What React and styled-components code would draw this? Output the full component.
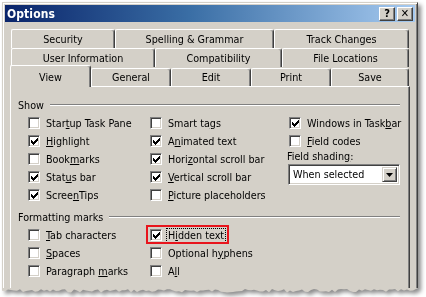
import React from "react";
import styled, { createGlobalStyle } from "styled-components";

const GlobalStyle = createGlobalStyle`
  html, body {
    margin: 0;
    padding: 0;
    background: #ffffff;
  }
  body {
    font-family: Tahoma, "DejaVu Sans Condensed", "Liberation Sans", sans-serif;
    font-size: 10.7px;
    color: #000;
  }
`;

const Page = styled.div`
  width: 426px;
  height: 297px;
  overflow: hidden;
  padding: 2px 0 0 2px;
  box-sizing: border-box;
`;

const Frame = styled.div`
  width: 416px;
  filter: drop-shadow(3px 3px 2px rgba(0, 0, 0, 0.45));
`;

const Window = styled.div`
  background: #d4d0c8;
  border: 1px solid;
  border-bottom: none;
  border-color: #d4d0c8 #404040 #404040 #d4d0c8;
  box-shadow: inset 1px 1px #ffffff, inset -1px 0 #808080;
  padding: 2px 2px 0 2px;
  height: 286px;
  box-sizing: border-box;
  display: flex;
  flex-direction: column;
`;

const TitleBar = styled.div`
  height: 17px;
  flex-shrink: 0;
  display: flex;
  align-items: center;
  padding: 0 2px 0 2px;
  background: linear-gradient(90deg, #0a246a 0%, #3a6ea5 45%, #a6caf0 100%);
`;

const Title = styled.div`
  flex: 1;
  color: #fff;
  font-weight: bold;
  font-size: 12px;
  letter-spacing: 0.1px;
`;

const CaptionButton = styled.div`
  width: 16px;
  height: 14px;
  margin-left: 2px;
  box-sizing: border-box;
  background: #d4d0c8;
  border: 1px solid;
  border-color: #fff #404040 #404040 #fff;
  box-shadow: inset -1px -1px #808080;
  display: flex;
  align-items: center;
  justify-content: center;
  font-weight: bold;
  font-size: 11px;
  line-height: 1;
`;

const Body = styled.div`
  flex: 1;
  display: flex;
  flex-direction: column;
  padding-top: 7px;
  min-height: 0;
`;

const TabRow = styled.div`
  display: flex;
  align-items: flex-end;
  height: ${(p) => p.$h}px;
  margin-left: ${(p) => p.$indent}px;
  position: relative;
  z-index: ${(p) => (p.$front ? 2 : 1)};
`;

const Tab = styled.div`
  width: ${(p) => p.$w}px;
  height: ${(p) => (p.$active ? 22 : p.$front ? 18 : 19)}px;
  margin-bottom: ${(p) => (p.$active ? -1 : 0)}px;
  box-sizing: border-box;
  background: #d4d0c8;
  border-top: 1px solid #fff;
  border-left: 1px solid #fff;
  border-right: 1px solid #404040;
  box-shadow: inset -1px 0 #808080;
  border-radius: 2px 3px 0 0;
  display: flex;
  align-items: ${(p) => (p.$active ? "flex-start" : "center")};
  padding-top: ${(p) => (p.$active ? 5 : 0)}px;
  justify-content: center;
  white-space: nowrap;
  position: relative;
  z-index: ${(p) => (p.$active ? 3 : 1)};
`;

const Panel = styled.div`
  flex: 1;
  width: 400px;
  margin-left: 5px;
  box-sizing: border-box;
  border-top: 1px solid #fff;
  border-left: 1px solid #fff;
  border-right: 1px solid #404040;
  box-shadow: inset -1px 0 #808080;
  padding: 11px 9px 0 7px;
  position: relative;
  z-index: 1;
`;

const GroupLabel = styled.div`
  display: flex;
  align-items: center;
  height: 14px;
  margin-top: ${(p) => p.$top || 0}px;
  margin-bottom: 2px;
  & > span {
    white-space: nowrap;
  }
  &::after {
    content: "";
    flex: 1;
    margin-left: 6px;
    border-top: 1px solid #808080;
    border-bottom: 1px solid #fff;
  }
`;

const Grid = styled.div`
  display: grid;
  grid-template-columns: 122px 139px 1fr;
  padding-left: 10px;
`;

const Column = styled.div`
  display: flex;
  flex-direction: column;
`;

const Option = styled.div`
  display: flex;
  align-items: center;
  height: 18px;
  white-space: nowrap;
`;

const OptionInner = styled.div`
  display: inline-flex;
  align-items: center;
  height: 18px;
  position: relative;
  ${(p) =>
    p.$marked &&
    `
    &::after {
      content: "";
      position: absolute;
      top: -1px;
      bottom: 0;
      left: -4px;
      right: -3px;
      border: 2px solid #e8141c;
    }
  `}
`;

const Box = styled.div`
  width: 12px;
  height: 12px;
  box-sizing: border-box;
  background: #fff;
  border: 1px solid;
  border-color: #808080 #fff #fff #808080;
  box-shadow: inset 1px 1px #404040, inset -1px -1px #d4d0c8;
  display: flex;
  align-items: center;
  justify-content: center;
  flex-shrink: 0;
`;

const Label = styled.span`
  margin-left: 4px;
  padding: 0 1px;
  border: 1px dotted ${(p) => (p.$focus ? "#000" : "transparent")};
  line-height: 13px;
`;

const FieldLabel = styled.div`
  height: 14px;
  line-height: 14px;
  white-space: nowrap;
  margin-left: -2px;
`;

const Select = styled.div`
  margin-top: 0;
  margin-left: -1px;
  width: 112px;
  height: 21px;
  box-sizing: border-box;
  background: #fff;
  border: 1px solid;
  border-color: #808080 #fff #fff #808080;
  box-shadow: inset 1px 1px #404040, inset -1px -1px #d4d0c8;
  display: flex;
  align-items: center;
  padding: 2px 2px 2px 4px;
`;

const SelectText = styled.div`
  flex: 1;
`;

const DropButton = styled.div`
  width: 15px;
  height: 15px;
  box-sizing: border-box;
  background: #d4d0c8;
  border: 1px solid;
  border-color: #d4d0c8 #404040 #404040 #d4d0c8;
  box-shadow: inset 1px 1px #fff, inset -1px -1px #808080;
  display: flex;
  align-items: center;
  justify-content: center;
`;

const Torn = styled.svg`
  display: block;
`;

const Check = () => (
  <svg width="7" height="7" viewBox="0 0 7 7">
    <path d="M0 2h1v1h1v1h1V3h1V2h1V1h1V0h1v3h-1v1h-1v1h-1v1h-1v1H2V6H1V5H0z" fill="#000" />
  </svg>
);

const CheckOption = ({ checked, children, marked, focus }) => (
  <Option>
    <OptionInner $marked={marked}>
      <Box>{checked && <Check />}</Box>
      <Label $focus={focus}>{children}</Label>
    </OptionInner>
  </Option>
);

const tornPoints = () => {
  const pts = ["0,0"];
  let seed = 7;
  for (let x = 0; x <= 416; x += 3) {
    seed = (seed * 9301 + 49297) % 233280;
    const y = 1 + (seed / 233280) * 3.5;
    pts.push(`${x},${y.toFixed(1)}`);
  }
  pts.push("416,0");
  return pts.join(" ");
};

const rows = [
  [
    ["Security", 104],
    ["Spelling & Grammar", 159],
    ["Track Changes", 135],
  ],
  [
    ["User Information", 144],
    ["Compatibility", 127],
    ["File Locations", 127],
  ],
];

const frontTabs = [
  ["View", 81],
  ["General", 80],
  ["Edit", 80],
  ["Print", 80],
  ["Save", 78],
];

export default function App() {
  return (
    <Page>
      <GlobalStyle />
      <Frame>
        <Window>
          <TitleBar>
            <Title>Options</Title>
            <CaptionButton>?</CaptionButton>
            <CaptionButton>✕</CaptionButton>
          </TitleBar>
          <Body>
            {rows.map((row, i) => (
              <TabRow key={i} $h={19} $indent={6}>
                {row.map(([name, w]) => (
                  <Tab key={name} $w={w}>
                    {name}
                  </Tab>
                ))}
              </TabRow>
            ))}
            <TabRow $h={19} $indent={5} $front>
              {frontTabs.map(([name, w], i) => (
                <Tab key={name} $w={w} $front $active={i === 0}>
                  {name}
                </Tab>
              ))}
            </TabRow>
            <Panel>
              <GroupLabel>
                <span>Show</span>
              </GroupLabel>
              <Grid>
                <Column>
                  <CheckOption>
                    Star<u>t</u>up Task Pane
                  </CheckOption>
                  <CheckOption checked>
                    <u>H</u>ighlight
                  </CheckOption>
                  <CheckOption>
                    Book<u>m</u>arks
                  </CheckOption>
                  <CheckOption checked>
                    Stat<u>u</u>s bar
                  </CheckOption>
                  <CheckOption checked>
                    Scree<u>n</u>Tips
                  </CheckOption>
                </Column>
                <Column>
                  <CheckOption>
                    Smart ta<u>g</u>s
                  </CheckOption>
                  <CheckOption checked>
                    A<u>n</u>imated text
                  </CheckOption>
                  <CheckOption checked>
                    Hori<u>z</u>ontal scroll bar
                  </CheckOption>
                  <CheckOption checked>
                    <u>V</u>ertical scroll bar
                  </CheckOption>
                  <CheckOption>
                    <u>P</u>icture placeholders
                  </CheckOption>
                </Column>
                <Column>
                  <CheckOption checked>
                    Windows in Task<u>b</u>ar
                  </CheckOption>
                  <CheckOption>
                    <u>F</u>ield codes
                  </CheckOption>
                  <FieldLabel>
                    Field shadin<u>g</u>:
                  </FieldLabel>
                  <Select>
                    <SelectText>When selected</SelectText>
                    <DropButton>
                      <svg width="7" height="4" viewBox="0 0 7 4">
                        <path d="M0 0h7L3.5 4z" fill="#000" />
                      </svg>
                    </DropButton>
                  </Select>
                </Column>
              </Grid>
              <GroupLabel $top={6}>
                <span>Formatting marks</span>
              </GroupLabel>
              <Grid>
                <Column>
                  <CheckOption>
                    <u>T</u>ab characters
                  </CheckOption>
                  <CheckOption>
                    <u>S</u>paces
                  </CheckOption>
                  <CheckOption>
                    Paragraph <u>m</u>arks
                  </CheckOption>
                </Column>
                <Column>
                  <CheckOption checked marked focus>
                    H<u>i</u>dden text
                  </CheckOption>
                  <CheckOption>
                    Optional h<u>y</u>phens
                  </CheckOption>
                  <CheckOption>
                    A<u>l</u>l
                  </CheckOption>
                </Column>
              </Grid>
            </Panel>
          </Body>
        </Window>
        <Torn width="416" height="6" viewBox="0 0 416 6">
          <polygon points={tornPoints()} fill="#d4d0c8" />
        </Torn>
      </Frame>
    </Page>
  );
}
